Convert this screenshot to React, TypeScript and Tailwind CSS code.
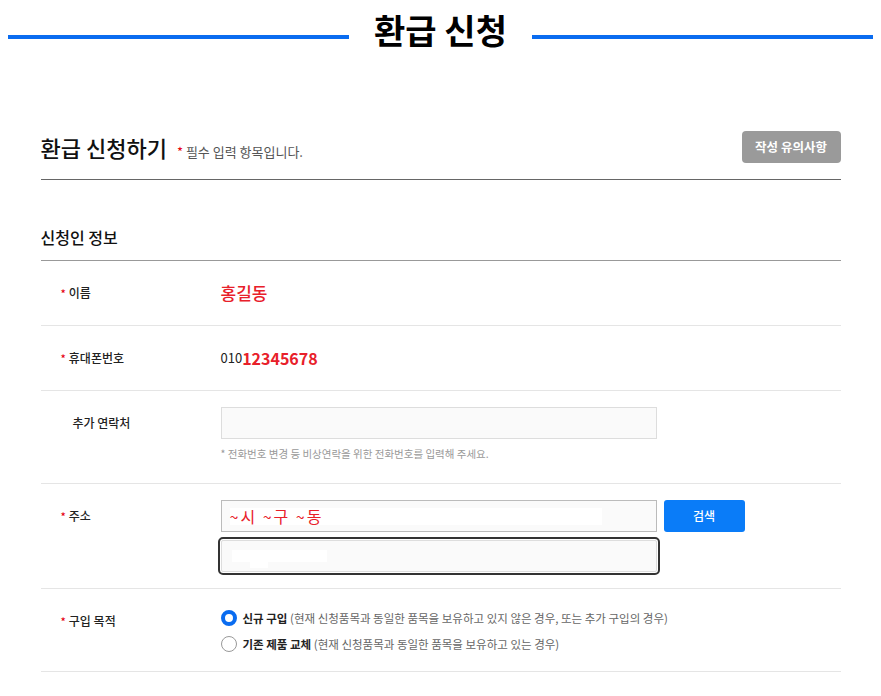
import React from "react";

function Star() {
  return <span className="mr-[3px] inline-block text-[11px] leading-[20px] text-[#e60012]">*</span>;
}

function Label({ text, required }: { text: string; required?: boolean }) {
  return (
    <div className={`w-[180px] shrink-0 pt-[22px] ${required ? "pl-[20px]" : "pl-[32px]"}`}>
      <div className="flex items-start text-[12px] font-medium leading-[20px] text-[#222]">
        {required && <Star />}
        <span>{text}</span>
      </div>
    </div>
  );
}

export default function App() {
  return (
    <div className="min-h-screen bg-white font-['Noto_Sans_CJK_KR','Noto_Sans',sans-serif] text-[#222]">
      {/* Page header */}
      <div className="flex h-[60px] items-start px-2 pt-[8px]">
        <div className="mt-[27px] h-[4px] flex-1 bg-[#0a6cf0]" />
        <h1 className="px-[25px] text-[34px] font-bold leading-[44px] text-black">환급 신청</h1>
        <div className="mt-[27px] h-[4px] flex-1 bg-[#0a6cf0]" />
      </div>

      <div className="mx-auto mt-[71px] w-[800px]">
        {/* Heading row */}
        <div className="flex items-center justify-between border-b border-[#666] pb-4">
          <div className="flex items-baseline">
            <h2 className="text-[22px] font-medium leading-[32px] text-[#111]">환급 신청하기</h2>
            <span className="ml-[10px] text-[13px] text-[#555]">
              <span className="text-[#e60012]">*</span> 필수 입력 항목입니다.
            </span>
          </div>
          <button className="h-[32px] w-[99px] rounded-[4px] bg-[#9a9a9a] text-[12.5px] font-bold text-white">
            작성 유의사항
          </button>
        </div>

        {/* Section title */}
        <h3 className="mt-[46px] border-b border-[#999] pb-[12px] text-[16px] font-medium leading-[22px] text-[#111]">
          신청인 정보
        </h3>

        {/* 이름 */}
        <div className="flex border-b border-[#e5e5e5]">
          <Label text="이름" required />
          <div className="flex h-[64px] flex-1 items-center text-[17px] font-medium leading-[20px] text-[#e8202a]">홍길동</div>
        </div>

        {/* 휴대폰번호 */}
        <div className="flex border-b border-[#e5e5e5]">
          <Label text="휴대폰번호" required />
          <div className="flex h-[64px] flex-1 items-center leading-[20px]">
            <span className="text-[13px] leading-[20px] text-[#222]">010</span>
            <span className="text-[16px] font-bold leading-[20px] text-[#e8202a]">12345678</span>
          </div>
        </div>

        {/* 추가 연락처 */}
        <div className="flex border-b border-[#e5e5e5]">
          <Label text="추가 연락처" />
          <div className="flex-1 pb-[21px] pt-[16px]">
            <div className="h-[32px] w-[436px] border border-[#ddd] bg-[#fafafa]" />
            <p className="mt-[7px] text-[10.5px] leading-[16px] text-[#999]">
              * 전화번호 변경 등 비상연락을 위한 전화번호를 입력해 주세요.
            </p>
          </div>
        </div>

        {/* 주소 */}
        <div className="flex border-b border-[#e5e5e5]">
          <Label text="주소" required />
          <div className="flex-1 pb-[16px] pt-[16px]">
            <div className="flex gap-[7px]">
              <div className="flex h-[32px] w-[436px] items-center border border-[#bbb] bg-[#fafafa] pl-[8px]">
                <span className="flex h-[17px] w-[372px] items-center bg-white text-[16px] leading-[17px] tracking-[2px] text-[#e8202a]">
                  ~시 ~구 ~동
                </span>
              </div>
              <button className="h-[32px] w-[81px] rounded-[3px] bg-[#0a7cf8] text-[12px] font-medium text-white">
                검색
              </button>
            </div>
            <div className="relative mt-[8px] h-[32px] w-[436px] rounded-[2px] border border-[#ddd] bg-[#fafafa] outline-2 outline-offset-1 outline-[#333]">
              <span className="absolute left-[10px] top-[9px] h-[12px] w-[95px] bg-white" />
              <span className="absolute left-[28px] top-[21px] h-[6px] w-[18px] bg-white" />
            </div>
          </div>
        </div>

        {/* 구입 목적 */}
        <div className="flex border-b border-[#e5e5e5]">
          <Label text="구입 목적" required />
          <div className="flex-1 pb-[14px] pt-[16px]">
            <div className="flex h-[26px] items-center">
              <span className="box-border h-[16px] w-[16px] shrink-0 rounded-full border-[4px] border-[#0a6cf0] bg-white" />
              <span className="ml-[6px] text-[11.5px] leading-[16px]">
                <b className="font-bold text-[#222]">신규 구입</b>{" "}
                <span className="text-[#666]">(현재 신청품목과 동일한 품목을 보유하고 있지 않은 경우, 또는 추가 구입의 경우)</span>
              </span>
            </div>
            <div className="flex h-[26px] items-center">
              <span className="box-border h-[16px] w-[16px] shrink-0 rounded-full border border-[#999] bg-white" />
              <span className="ml-[6px] text-[11.5px] leading-[16px]">
                <b className="font-bold text-[#222]">기존 제품 교체</b>{" "}
                <span className="text-[#666]">(현재 신청품목과 동일한 품목을 보유하고 있는 경우)</span>
              </span>
            </div>
          </div>
        </div>
      </div>
    </div>
  );
}
